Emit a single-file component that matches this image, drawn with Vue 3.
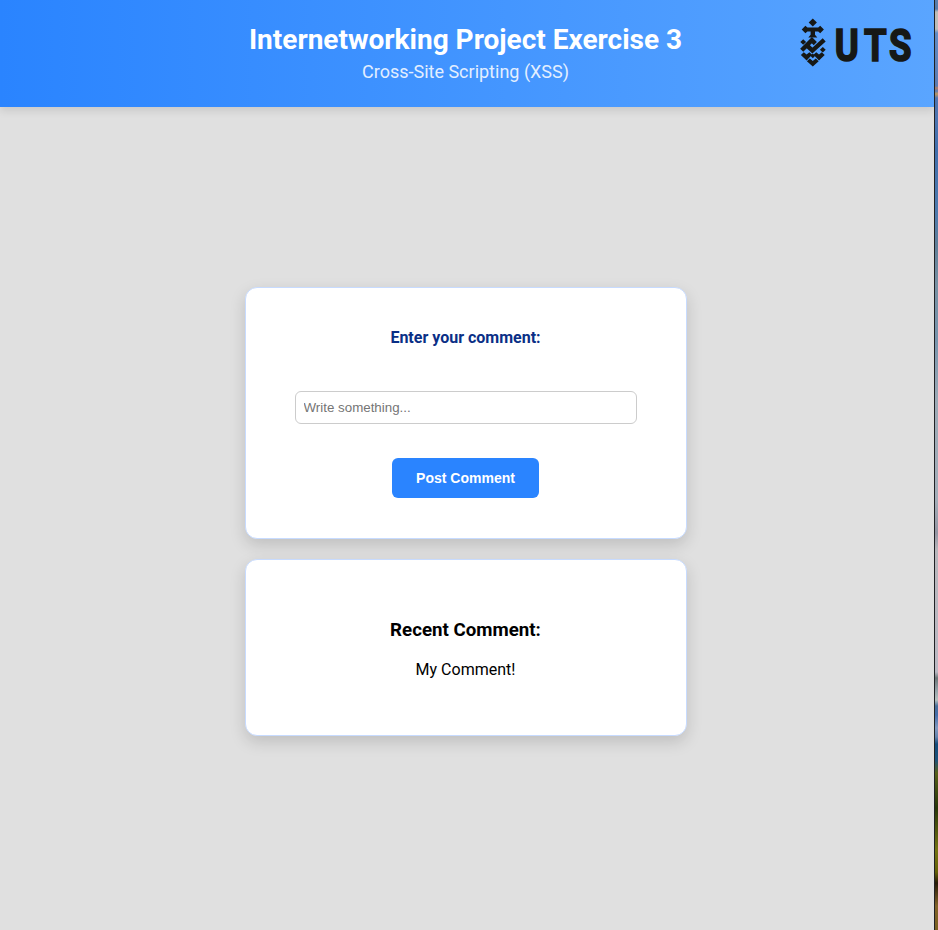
<script setup>
import { ref } from 'vue'

const draft = ref('')
const comment = ref('My Comment!')

function postComment() {
  if (draft.value) comment.value = draft.value
  draft.value = ''
}
</script>

<template>
  <div class="screen">
    <div class="page">
      <header class="header">
        <h1>Internetworking Project Exercise 3</h1>
        <p>Cross-Site Scripting (XSS)</p>
        <svg class="logo" viewBox="798 16 116 52" role="img" aria-label="UTS">
          <g class="mark">
            <path d="M812.8 18.4l4.1 4-4.1 4-4.1-4z" />
            <path d="M801.7 29.5l3.7-3.8 2 1.8h10.8l2-1.8 3.7 3.8-3.7 3.8-2-1.8h-3.2v3.3l2.3 2.8h-9l2.3-2.8v-3.3h-3.2l-2 1.8z" />
            <path d="M803.2 39.2l2.9 2.8-2.9 2.8-2.9-2.8z" />
            <path d="M822.8 46.9l2.9 2.8-2.9 2.8-2.9-2.8z" />
            <path class="band" d="M801.7 50.2l10.2-10 3.4 3.4M808.2 46.6l4.2 4 11.8-10.8" />
            <path d="M800.9 54.9l2.9-2.7 2.8 2.3 2.8-2.3 2.7 2.6-5.5 5.6z" />
            <path d="M813.5 54.8l2.7-2.6 2.8 2.3 2.8-2.3 2.9 2.7-5.7 5.5z" />
            <path d="M812.8 53.4l2.4 2.4-2.4 2.4-2.4-2.4z" />
            <path d="M806.9 61.2l2.9-2.7 3 2.5 3-2.5 2.9 2.7-5.9 5.4z" />
          </g>
          <text class="wordmark" transform="translate(834.8 60.6) scale(.83 1)" x="0 35.2 65.2" y="0">UTS</text>
        </svg>
      </header>
      <main class="content">
        <form class="card form" @submit.prevent="postComment">
          <label for="comment">Enter your comment:</label>
          <input id="comment" v-model="draft" type="text" placeholder="Write something..." />
          <button type="submit">Post Comment</button>
        </form>
        <section class="card recent">
          <h3>Recent Comment:</h3>
          <p>{{ comment }}</p>
        </section>
      </main>
    </div>
    <div class="desktop"></div>
  </div>
</template>

<style>
body {
  margin: 0;
}
</style>

<style scoped>
.screen {
  display: flex;
  height: 930px;
  overflow: hidden;
  font-family: Roboto, sans-serif;
}
.page {
  display: flex;
  flex-direction: column;
  width: 934px;
  background: #e0e0e0;
}
.header {
  position: relative;
  box-sizing: border-box;
  height: 107px;
  padding: 23px 3px 0 0;
  text-align: center;
  color: #fff;
  background: linear-gradient(90deg, #2a84ff, #5aa5ff);
  box-shadow: 0 4px 8px rgba(0, 0, 0, 0.1);
}
.header h1 {
  margin: 0;
  font-size: 28px;
  line-height: 33px;
  font-weight: 700;
}
.header p {
  margin: 5px 0 0;
  font-size: 18px;
  line-height: 22px;
  opacity: 0.85;
}
.logo {
  position: absolute;
  top: 16px;
  right: 20px;
  width: 116px;
  height: 52px;
  overflow: visible;
}
.mark {
  fill: #161816;
}
.band {
  fill: none;
  stroke: #161816;
  stroke-width: 4.4;
}
.wordmark {
  fill: #161816;
  stroke: #161816;
  stroke-width: 1.7;
  font-family: Roboto, sans-serif;
  font-size: 44px;
  font-weight: 700;
}
.content {
  flex: 1;
  display: flex;
  flex-direction: column;
  align-items: center;
  gap: 20px;
  padding: 180px 3px 0 0;
}
.card {
  box-sizing: border-box;
  display: flex;
  flex-direction: column;
  align-items: center;
  width: 442px;
  background: #fff;
  border: 1px solid #c7dbff;
  border-radius: 12px;
  box-shadow: 0 6px 16px rgba(0, 0, 0, 0.15);
}
.form {
  height: 252px;
  padding-top: 40px;
}
.form label {
  font-size: 16px;
  line-height: 19px;
  font-weight: 700;
  color: #0a2f86;
}
.form input {
  box-sizing: border-box;
  width: 342px;
  height: 33px;
  margin: 44px 0 34px;
  padding: 0 8px;
  border: 1px solid #ccc;
  border-radius: 6px;
  font-family: "Liberation Sans", sans-serif;
  font-size: 13.333px;
}
.form input::placeholder {
  color: #757575;
}
.form button {
  width: 147px;
  height: 40px;
  padding: 0;
  border: 0;
  border-radius: 6px;
  background: #2a84ff;
  color: #fff;
  font-family: "Liberation Sans", sans-serif;
  font-size: 14px;
  font-weight: 700;
}
.recent {
  height: 177px;
  padding-top: 59px;
}
.recent h3 {
  margin: 0;
  font-size: 18.72px;
  line-height: 22px;
}
.recent p {
  margin: 19px 0 0;
  font-size: 16px;
  line-height: 19px;
}
.desktop {
  box-sizing: border-box;
  width: 4px;
  border-left: 1px solid #202124;
  background: linear-gradient(
    #5c7fae 0, #5c7fae 9px, #c4c2bd 12px, #c4c2bd 29px, #6590cb 33px,
    #607fb5 86px, #b58268 88px, #607fb5 91px, #c19a63 94px, #5479b4 98px,
    #416fac 150px, #4f7bad 215px, #607f98 245px, #7891a3 285px,
    #7895ad 340px, #9caab6 400px, #a4aeb9 500px, #9496a3 533px,
    #b8b7bc 550px, #bbb9c3 672px, #6d7879 678px, #94a2a8 690px,
    #b5c0bf 700px, #496f9a 706px, #466eaa 715px, #829ac0 728px,
    #6483ae 737px, #144c7b 744px, #1d5279 760px, #576019 773px,
    #283709 808px, #747412 850px, #646107 872px, #261b07 883px,
    #826329 906px, #796020 930px
  );
}
</style>
